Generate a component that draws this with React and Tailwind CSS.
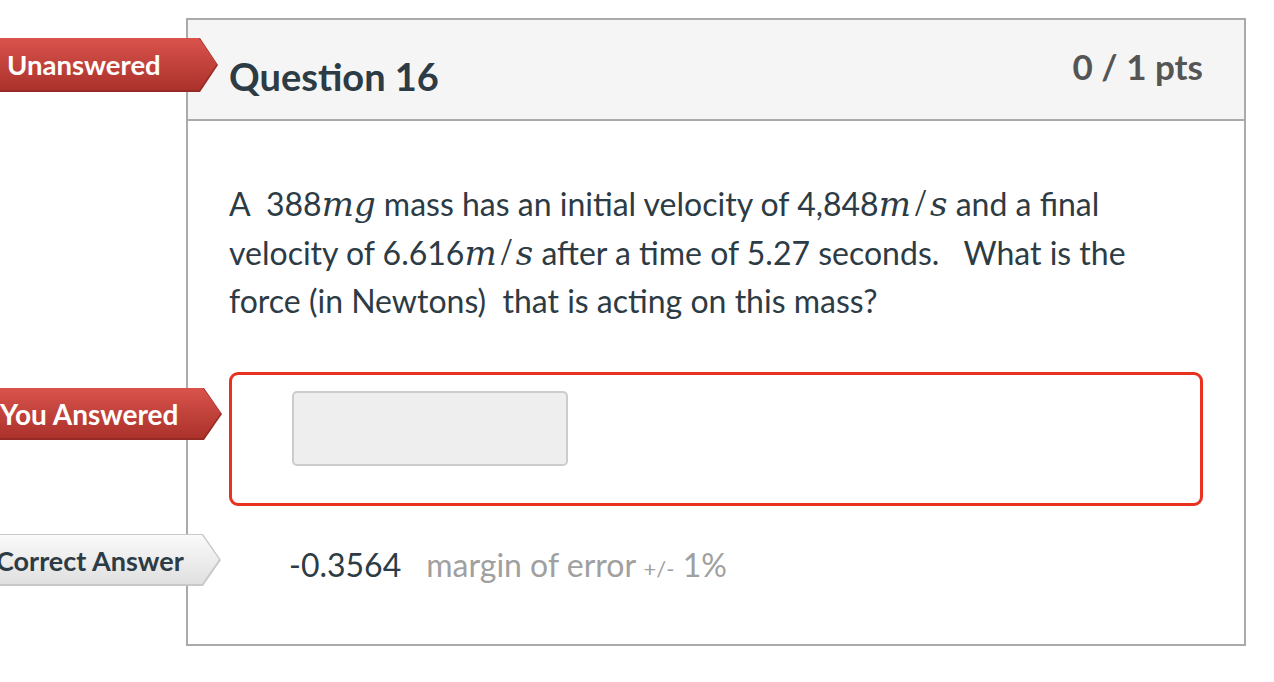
export default function App() {
  const lato = { fontFamily: "Lato, 'Noto Sans', sans-serif" };
  const mathI = { fontFamily: "'DejaVu Serif', serif" };
  const mathR = { fontFamily: "'Liberation Serif', serif" };
  return (
    <div className="relative w-[1274px] h-[682px] bg-white overflow-hidden" style={lato}>
      <div className="pt-[18px] pl-[186px]">
        <div className="w-[1060px] h-[628px] border-2 border-[#aaaaaa] flex flex-col">
          <div className="h-[101px] bg-[#f5f5f5] border-b-2 border-[#aaaaaa] flex items-start justify-between px-[41px]">
            <div className="pt-[32px] text-[38px] font-bold text-[#2d3b45] leading-[48px]">Question 16</div>
            <div className="pt-[26px] text-[35px] font-bold text-[#555555] leading-[40px]">0 / 1 pts</div>
          </div>
          <div className="px-[41px] pt-[58px]">
            <p className="text-[32px] leading-[48px] text-[#2d3b45]">
              A&nbsp; 388<span className="italic text-[34px]" style={mathI}>mg</span> mass has an initial velocity of&nbsp;4,848<span className="italic text-[34px]" style={mathI}>m</span><span className="text-[40px] mx-[4px]" style={mathR}>/</span><span className="italic text-[34px]" style={mathI}>s</span> and a final
              <br />
              velocity of 6.616<span className="italic text-[34px]" style={mathI}>m</span><span className="text-[40px] mx-[4px]" style={mathR}>/</span><span className="italic text-[34px]" style={mathI}>s</span> after a time of 5.27 seconds. &nbsp; What is the
              <br />
              force (in Newtons)&nbsp; that is acting on this mass?
            </p>
            <div className="mt-[47px] h-[134px] border-[3px] border-[#e8321f] rounded-[9px] pl-[60px] pt-[16px]">
              <div className="w-[276px] h-[75px] bg-[#eeeeee] border-2 border-[#cccccc] rounded-[5px]"></div>
            </div>
            <div className="mt-[41px] pl-[60px] flex items-baseline text-[32px] leading-[36px]">
              <span className="text-[#2d3b45]">-0.3564</span>
              <span className="ml-[25px] text-[#a0a0a0]">margin of error <span className="text-[22px]">+/-</span> 1%</span>
            </div>
          </div>
        </div>
      </div>

      {/* Unanswered banner */}
      <div className="absolute left-0 top-[38px] w-[218px] h-[54px] bg-[#962a24]" style={{ clipPath: "polygon(0 0, 200px 0, 100% 50%, 200px 100%, 0 100%)" }}>
        <div className="h-[52px] bg-gradient-to-b from-[#d9534c] to-[#ab322b] flex items-center pl-[7px] pt-[2px] text-white text-[27.5px] font-bold leading-none" style={{ clipPath: "polygon(0 0, 199px 0, 217px 50%, 199px 100%, 0 100%)" }}>
          Unanswered
        </div>
      </div>

      {/* You Answered banner */}
      <div className="absolute left-0 top-[388px] w-[222px] h-[52px] bg-[#962a24]" style={{ clipPath: "polygon(0 0, 204px 0, 100% 50%, 204px 100%, 0 100%)" }}>
        <div className="h-[50px] bg-gradient-to-b from-[#d9534c] to-[#ab322b] flex items-center pt-[2px] text-white text-[28px] font-bold leading-none" style={{ clipPath: "polygon(0 0, 203px 0, 221px 50%, 203px 100%, 0 100%)" }}>
          You Answered
        </div>
      </div>

      {/* Correct Answer banner */}
      <div className="absolute left-0 top-[534px] w-[221px] h-[52px] bg-[#c8c8c8]" style={{ clipPath: "polygon(0 0, 203px 0, 100% 50%, 203px 100%, 0 100%)" }}>
        <div className="mt-[1px] h-[49px] bg-gradient-to-b from-[#fafafa] to-[#e0e0e0] flex items-center pt-[2px] text-[#2d3b45] text-[27px] font-bold leading-none" style={{ clipPath: "polygon(0 0, 202px 0, 219px 50%, 202px 100%, 0 100%)" }}>
          <span className="-ml-[4px] whitespace-nowrap">Correct Answer</span>
        </div>
      </div>
    </div>
  );
}
